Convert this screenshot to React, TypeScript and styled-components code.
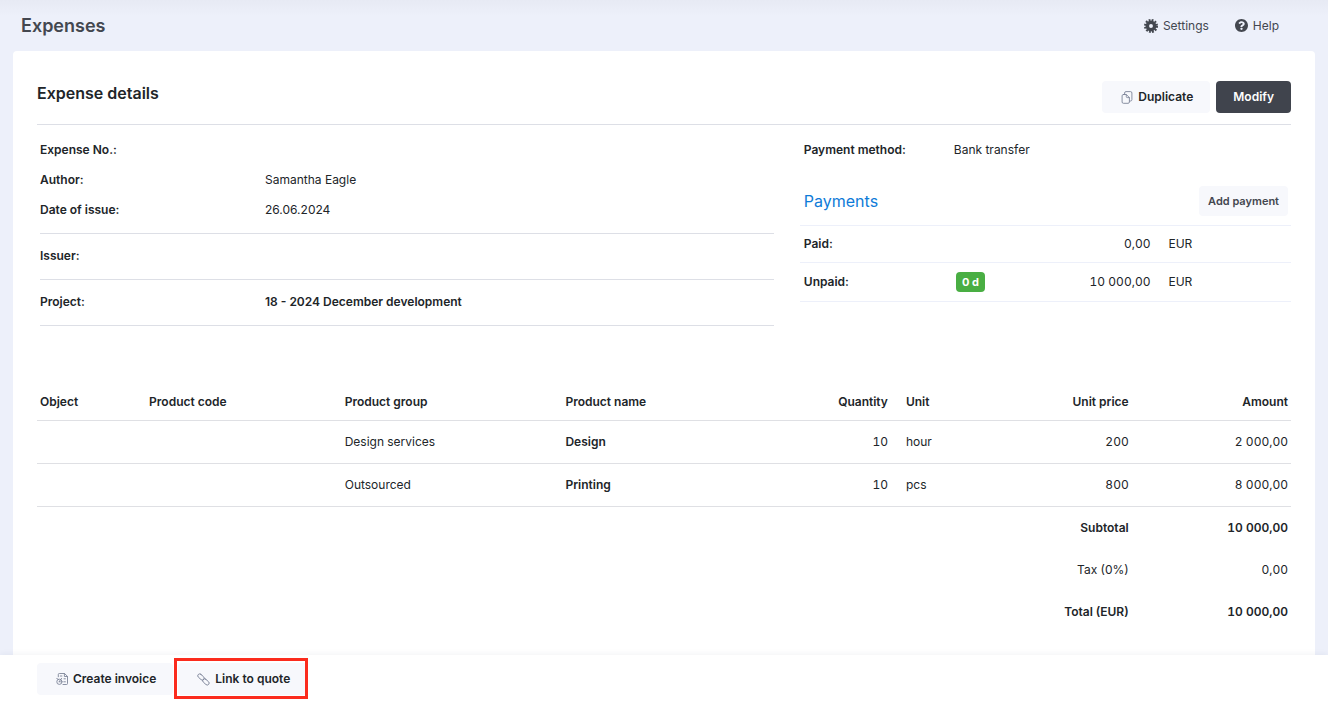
import React from "react";
import styled, { createGlobalStyle, css } from "styled-components";

const GlobalStyle = createGlobalStyle`
  *, *::before, *::after { box-sizing: border-box; }
  body {
    margin: 0;
    background: #edf0fa;
    color: #212529;
    font-family: Inter, "Liberation Sans", sans-serif;
    font-size: 12px;
    line-height: 16px;
  }
  button { font: inherit; cursor: pointer; }
  strong { font-weight: 600; }
`;

const Page = styled.div`
  min-height: 100vh;
  display: flex;
  flex-direction: column;
  background: linear-gradient(#e7eaf4, #edf0fa 16px);
`;

const Header = styled.header`
  height: 51px;
  padding: 0 49px 0 21px;
  display: flex;
  align-items: center;
  justify-content: space-between;
`;

const PageTitle = styled.h1`
  margin: 0;
  font-size: 18px;
  line-height: 24px;
  font-weight: 600;
  color: #43474f;
`;

const HeaderNav = styled.nav`
  display: flex;
  gap: 26px;
`;

const HeaderLink = styled.a`
  display: flex;
  align-items: center;
  gap: 5px;
  color: #43474f;
  text-decoration: none;
`;

const Card = styled.main`
  flex: 1;
  margin: 0 13px;
  padding: 30px 24px 21px;
  background: #fff;
  border-radius: 4px 4px 0 0;
`;

const CardHeader = styled.div`
  display: flex;
  justify-content: space-between;
  align-items: flex-start;
  padding-bottom: 11px;
  border-bottom: 1px solid #dddfe6;
`;

const CardTitle = styled.h2`
  margin: 0;
  font-size: 16px;
  line-height: 24px;
  font-weight: 600;
`;

const Actions = styled.div`
  display: flex;
  gap: 6px;
`;

const Button = styled.button<{ $dark?: boolean; $small?: boolean }>`
  height: 32px;
  padding: 0 17px 0 19px;
  display: flex;
  align-items: center;
  gap: 5px;
  border: 0;
  border-radius: 4px;
  background: #f7f8fc;
  color: #212529;
  font-weight: 600;
  white-space: nowrap;
  ${(p) => p.$dark && css`
    padding: 0 17px;
    background: #40444d;
    color: #fff;
  `}
  ${(p) => p.$small && css`
    height: 30px;
    padding: 0 9px;
    color: #43474f;
    font-size: 11px;
  `}
`;

const Details = styled.div`
  display: grid;
  grid-template-columns: 3fr 2fr;
  column-gap: 26px;
  min-height: 258px;
`;

const FieldGroup = styled.dl`
  margin: 0 0 0 3px;
  padding: 7px 0 8px;
  border-bottom: 1px solid #dddfe6;
  &:first-child { padding-top: 10px; }
`;

const Field = styled.div`
  display: flex;
  align-items: center;
  height: 30px;
  dt { width: 225px; font-weight: 600; }
  dd { margin: 0; }
`;

const PaymentMethod = styled.dl`
  margin: 0;
  padding: 10px 3px 0 4px;
  dt { width: 150px; }
`;

const PaymentsHeader = styled.div`
  display: flex;
  justify-content: space-between;
  align-items: center;
  padding: 21px 3px 9px 4px;
`;

const PaymentsTitle = styled.h3`
  margin: 0;
  font-size: 16px;
  line-height: 24px;
  font-weight: 400;
  color: #0f7bd8;
`;

const PaymentsTable = styled.table`
  width: 100%;
  border-spacing: 0;
  table-layout: fixed;
  border-top: 1px solid #edf0fa;
  th, td {
    height: 37px;
    padding: 9px 3px 9px 4px;
    border-bottom: 1px solid #edf0fa;
    text-align: left;
  }
  th { font-weight: 600; }
`;

const PayCell = styled.td<{ $right?: boolean }>`
  && {
    padding-left: ${(p) => (p.$right ? 3 : 15)}px;
    text-align: ${(p) => (p.$right ? "right" : "left")};
    font-variant-numeric: tabular-nums;
  }
`;

const Badge = styled.span`
  display: block;
  width: fit-content;
  padding: 0 6px;
  border-radius: 4px;
  background: #49ae43;
  color: #fff;
  font-size: 11px;
  font-weight: 700;
  line-height: 20px;
`;

const Items = styled.table`
  width: 100%;
  border-spacing: 0;
  table-layout: fixed;
  thead th { height: 38px; }
  tbody td { height: 43px; }
  thead th, tbody td { border-bottom: 1px solid #dfe0e4; }
  tfoot th, tfoot td { height: 42px; }
`;

interface CellProps { $right?: boolean; $bold?: boolean; $unit?: boolean }

const cell = css<CellProps>`
  padding: 0 3px 0 ${(p) => (p.$unit ? 15 : 3)}px;
  text-align: ${(p) => (p.$right ? "right" : "left")};
  white-space: nowrap;
`;
const Th = styled.th<CellProps>`
  ${cell}
  font-weight: ${(p) => (p.$bold === false ? 400 : 600)};
`;
const Td = styled.td<CellProps>`
  ${cell}
  font-weight: ${(p) => (p.$bold ? 600 : 400)};
  font-variant-numeric: tabular-nums;
`;
const Col = styled.col<{ $w: number }>`
  width: ${(p) => p.$w}%;
`;

const Footer = styled.footer`
  position: sticky;
  bottom: 0;
  display: flex;
  gap: 5px;
  height: 46px;
  padding: 8px 37px 6px;
  background: #fff;
  box-shadow: 0 -1px 6px rgba(40, 50, 80, 0.06);
`;

const Highlight = styled.div`
  position: relative;
  &::after {
    content: "";
    position: absolute;
    inset: -5px -1px -4px -4px;
    border: 3px solid #fb2b1d;
    pointer-events: none;
  }
`;

const GearIcon = () => (
  <svg width="14" height="14" viewBox="0 0 14 14" aria-hidden="true">
    <circle cx="7" cy="7" r="3.7" fill="none" stroke="#43474f" strokeWidth="3.5" />
    <circle cx="7" cy="7" r="5.9" fill="none" stroke="#43474f" strokeWidth="2.2" strokeDasharray="1.8 1.289" />
  </svg>
);

const HelpIcon = () => (
  <svg width="13" height="13" viewBox="8 8 496 496" aria-hidden="true">
    <path fill="#43474f" d="M504 256c0 136.997-111.043 248-248 248S8 392.997 8 256C8 119.083 119.043 8 256 8s248 111.083 248 248zM262.655 90c-54.497 0-89.255 22.957-116.549 63.758-3.536 5.286-2.353 12.415 2.715 16.258l34.699 26.31c5.205 3.947 12.621 3.008 16.665-2.122 17.864-22.658 30.113-35.797 57.303-35.797 20.429 0 45.698 13.148 45.698 32.958 0 14.976-12.363 22.667-32.534 33.976C247.128 238.528 216 254.941 216 296v4c0 6.627 5.373 12 12 12h56c6.627 0 12-5.373 12-12v-1.333c0-28.462 83.186-29.647 83.186-106.667 0-58.002-60.165-102-116.531-102zM256 338c-25.365 0-46 20.635-46 46 0 25.364 20.635 46 46 46s46-20.636 46-46c0-25.365-20.635-46-46-46z" />
  </svg>
);

const lineIcon = {
  width: 12,
  height: 12,
  fill: "none",
  stroke: "#7d8499",
  strokeWidth: 0.9,
  strokeLinecap: "round",
  strokeLinejoin: "round",
  "aria-hidden": true,
} as const;

const CopyIcon = () => (
  <svg {...lineIcon} height={13} viewBox="-0.5 0 12 13">
    <path d="M1.9 3.5h2.900L7.900 6.600V11a1.300 1.300 0 0 1-1.300 1.300H1.900A1.300 1.300 0 0 1 .600 11V4.800a1.300 1.300 0 0 1 1.300-1.300z" />
    <path d="M4.800 3.700v1.900a1 1 0 0 0 1 1h1.900" />
    <path d="M3.100 3.300V2A1.400 1.400 0 0 1 4.500.600H9A1.400 1.400 0 0 1 10.400 2v6.600A1.400 1.400 0 0 1 9 10H8.100" />
  </svg>
);

const InvoiceIcon = () => (
  <svg {...lineIcon} viewBox="0 0 12 12">
    <path d="M2.300 3.800V1.500a1 1 0 0 1 1-1h5.200L11.500 3.400v7.100a1 1 0 0 1-1 1H7" />
    <path d="M8.400.600v2.900h2.900M4.300 3h1.600M8 5.800h1.400M7.800 8.800h1.600" />
    <circle cx="3.400" cy="8.800" r="2.600" />
    <path d="M.800 5.600l1.400.600M5.600 5.300 3 8.800M3.400 8.800h1" />
  </svg>
);

const LinkIcon = () => (
  <svg {...lineIcon} width={13} height={13} viewBox="0 0 13 13">
    <rect x="-3.700" y="-1.900" width="7.400" height="3.800" rx="1.900" transform="translate(4 4) rotate(42)" />
    <rect x="-3.700" y="-1.900" width="7.400" height="3.800" rx="1.900" transform="translate(8.900 8.900) rotate(42)" />
  </svg>
);

const issueFields = [
  ["Expense No.:", ""],
  ["Author:", "Samantha Eagle"],
  ["Date of issue:", "26.06.2024"],
];

const items = [
  { group: "Design services", name: "Design", quantity: "10", unit: "hour", price: "200", amount: "2 000,00" },
  { group: "Outsourced", name: "Printing", quantity: "10", unit: "pcs", price: "800", amount: "8 000,00" },
];

const totals = [
  { label: "Subtotal", value: "10 000,00", bold: true },
  { label: "Tax (0%)", value: "0,00", bold: false },
  { label: "Total (EUR)", value: "10 000,00", bold: true },
];

export default function App() {
  return (
    <>
      <GlobalStyle />
      <Page>
        <Header>
          <PageTitle>Expenses</PageTitle>
          <HeaderNav>
            <HeaderLink href="#settings"><GearIcon />Settings</HeaderLink>
            <HeaderLink href="#help"><HelpIcon />Help</HeaderLink>
          </HeaderNav>
        </Header>

        <Card>
          <CardHeader>
            <CardTitle>Expense details</CardTitle>
            <Actions>
              <Button type="button"><CopyIcon />Duplicate</Button>
              <Button type="button" $dark>Modify</Button>
            </Actions>
          </CardHeader>

          <Details>
            <div>
              <FieldGroup>
                {issueFields.map(([label, value]) => (
                  <Field key={label}><dt>{label}</dt><dd>{value}</dd></Field>
                ))}
              </FieldGroup>
              <FieldGroup>
                <Field><dt>Issuer:</dt><dd /></Field>
              </FieldGroup>
              <FieldGroup>
                <Field><dt>Project:</dt><dd><strong>18 - 2024 December development</strong></dd></Field>
              </FieldGroup>
            </div>
            <div>
              <PaymentMethod>
                <Field><dt>Payment method:</dt><dd>Bank transfer</dd></Field>
              </PaymentMethod>
              <PaymentsHeader>
                <PaymentsTitle>Payments</PaymentsTitle>
                <Button type="button" $small>Add payment</Button>
              </PaymentsHeader>
              <PaymentsTable>
                <colgroup><Col $w={31} /><Col $w={11} /><Col $w={30} /><Col $w={28} /></colgroup>
                <tbody>
                  <tr><th scope="row">Paid:</th><td /><PayCell $right>0,00</PayCell><PayCell>EUR</PayCell></tr>
                  <tr><th scope="row">Unpaid:</th><td><Badge>0 d</Badge></td><PayCell $right>10 000,00</PayCell><PayCell>EUR</PayCell></tr>
                </tbody>
              </PaymentsTable>
            </div>
          </Details>

          <Items>
            <colgroup>
              <Col $w={8.7} /><Col $w={15.6} /><Col $w={17.6} /><Col $w={18.2} />
              <Col $w={8} /><Col $w={11.2} /><Col $w={8} /><Col $w={12.7} />
            </colgroup>
            <thead>
              <tr>
                <Th scope="col">Object</Th>
                <Th scope="col">Product code</Th>
                <Th scope="col">Product group</Th>
                <Th scope="col">Product name</Th>
                <Th scope="col" $right>Quantity</Th>
                <Th scope="col" $unit>Unit</Th>
                <Th scope="col" $right>Unit price</Th>
                <Th scope="col" $right>Amount</Th>
              </tr>
            </thead>
            <tbody>
              {items.map((item) => (
                <tr key={item.name}>
                  <Td />
                  <Td />
                  <Td>{item.group}</Td>
                  <Td $bold>{item.name}</Td>
                  <Td $right>{item.quantity}</Td>
                  <Td $unit>{item.unit}</Td>
                  <Td $right>{item.price}</Td>
                  <Td $right>{item.amount}</Td>
                </tr>
              ))}
            </tbody>
            <tfoot>
              {totals.map((total) => (
                <tr key={total.label}>
                  <Th scope="row" colSpan={7} $right $bold={total.bold}>{total.label}</Th>
                  <Td $right $bold={total.bold}>{total.value}</Td>
                </tr>
              ))}
            </tfoot>
          </Items>
        </Card>

        <Footer>
          <Button type="button"><InvoiceIcon />Create invoice</Button>
          <Highlight>
            <Button type="button"><LinkIcon />Link to quote</Button>
          </Highlight>
        </Footer>
      </Page>
    </>
  );
}
